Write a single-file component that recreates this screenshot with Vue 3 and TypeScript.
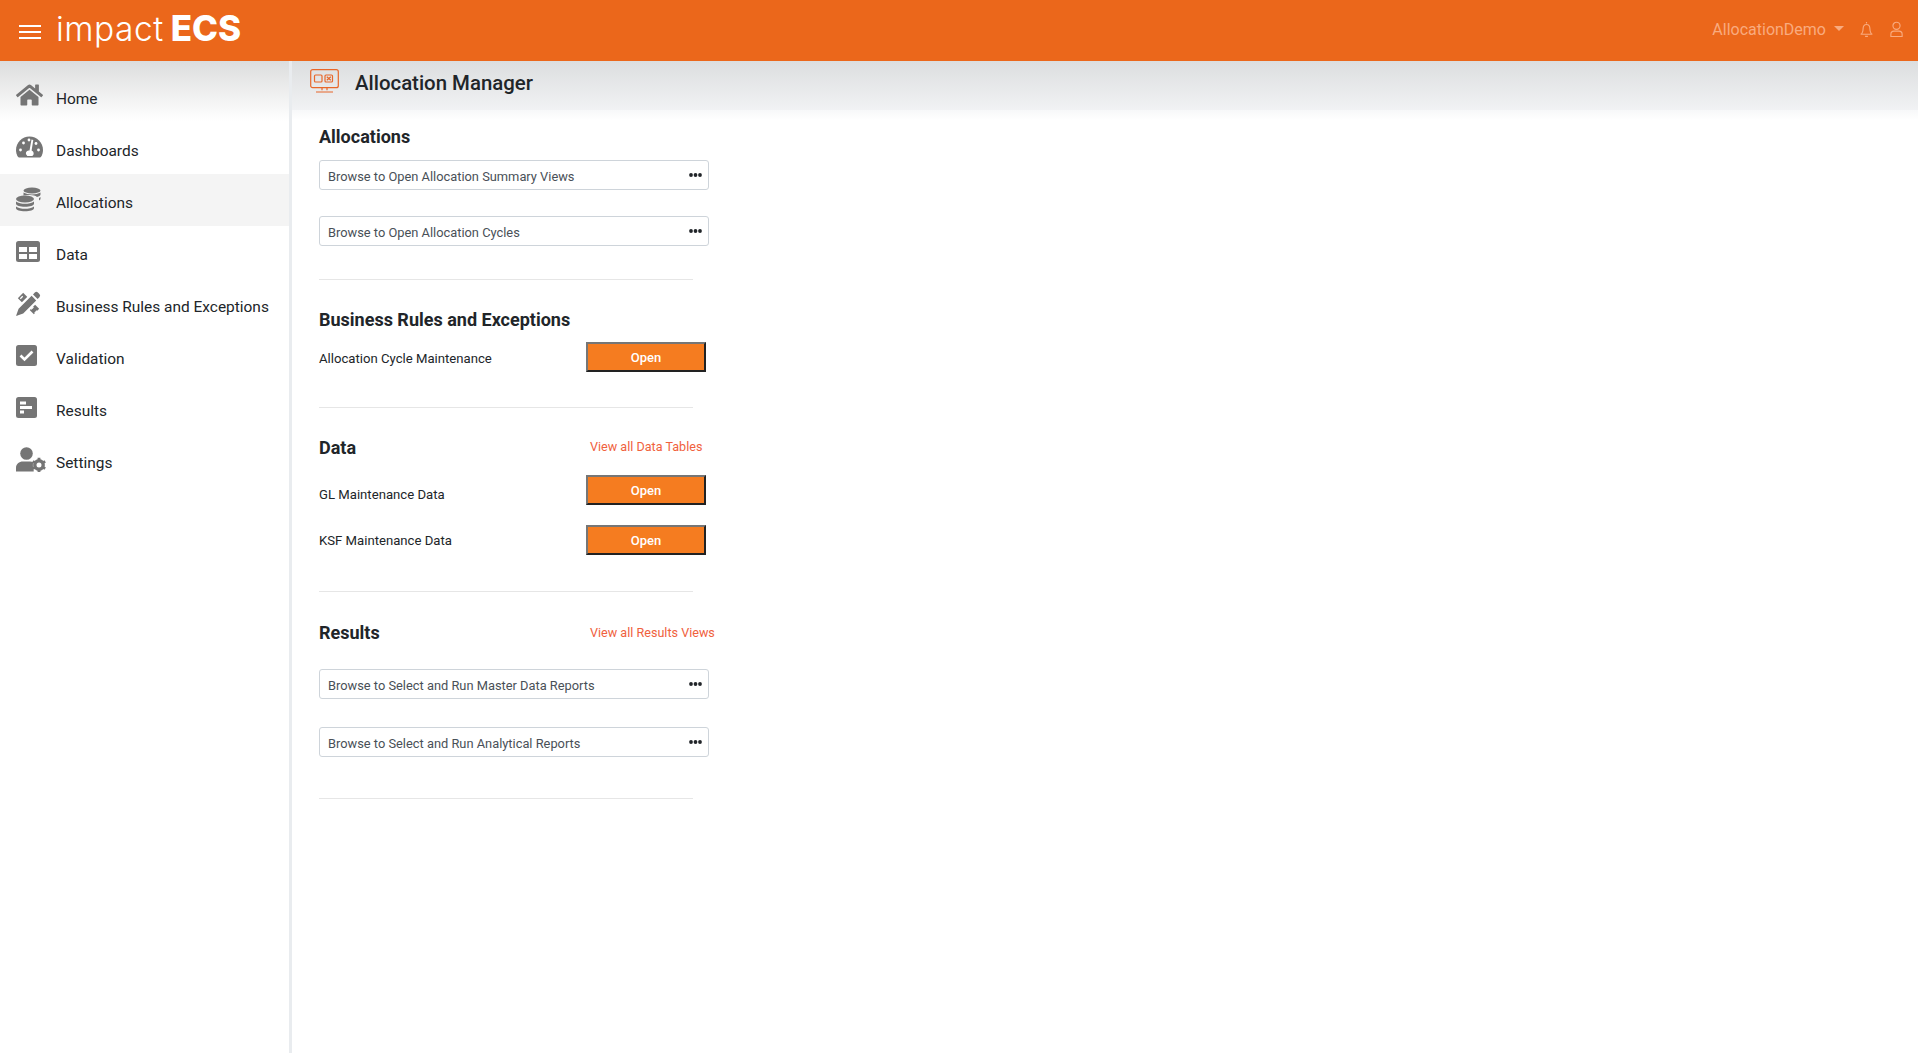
<script setup lang="ts">
const nav = ['Home','Dashboards','Allocations','Data','Business Rules and Exceptions','Validation','Results','Settings']
</script>

<template>
  <div class="app">
    <header class="top">
      <button class="burger" aria-label="Menu"><i></i><i></i><i></i></button>
      <div class="logo"><span class="l1">impact</span><span class="l2">ECS</span></div>
      <div class="right">
        <span class="acct">AllocationDemo</span>
        <span class="caret"></span>
        <svg class="ti bell" viewBox="0 0 16 18" fill="none" stroke="currentColor" stroke-width="1.2"><path d="M8 1v1.600M3.200 13c.9-1.300 1.200-2.600 1.200-5 0-2.500 1.500-4.400 3.600-4.400s3.600 1.900 3.600 4.400c0 2.400.3 3.700 1.200 5 .4.600.9.800 1.400 1H1.800c.5-.2 1-.4 1.400-1zM6.500 16.300h3"/></svg>
        <svg class="ti user" viewBox="0 0 16 18" fill="none" stroke="currentColor" stroke-width="1.2"><circle cx="8" cy="5" r="3.800"/><path d="M2 16.500v-2.500c0-2 1.500-3.300 3.300-3.300h5.400c1.800 0 3.300 1.300 3.300 3.300v2.500z"/></svg>
      </div>
    </header>
    <div class="body">
      <aside class="side">
        <a v-for="(n,i) in nav" :key="n" class="item" :class="{active:i===2}">
          <span class="ic" :class="{sq:i===3||i===5||i===6}">
            <svg v-if="i===0" width="27" height="24" viewBox="0 0 576 512" fill="#757575"><path d="M280.37 148.26L96 300.11V464a16 16 0 0 0 16 16l112.06-.29a16 16 0 0 0 15.92-16V368a16 16 0 0 1 16-16h64a16 16 0 0 1 16 16v95.64a16 16 0 0 0 16 16.05L464 480a16 16 0 0 0 16-16V300L295.67 148.26a12.19 12.19 0 0 0-15.3 0zM571.6 251.47L488 182.56V44.05a12 12 0 0 0-12-12h-56a12 12 0 0 0-12 12v72.61L318.47 43a48 48 0 0 0-61 0L4.34 251.47a12 12 0 0 0-1.6 16.9l25.5 31A12 12 0 0 0 45.15 301l235.22-193.74a12.19 12.19 0 0 1 15.3 0L530.9 301a12 12 0 0 0 16.9-1.6l25.5-31a12 12 0 0 0-1.7-16.93z"/></svg>
            <svg v-else-if="i===1" width="27" height="24" viewBox="0 0 27 24"><path fill="#757575" d="M13.500 1.500C6.100 1.500 0 7.500 0 15c0 2.500.7 4.800 1.900 6.800.3.400.7.700 1.200.7h20.800c.5 0 .9-.3 1.200-.7C26.300 19.800 27 17.500 27 15 27 7.500 20.900 1.500 13.500 1.500z"/><g fill="#fff"><circle cx="13" cy="5" r="1.400"/><circle cx="7.500" cy="8" r="1.400"/><circle cx="4.500" cy="15" r="1.400"/><circle cx="22.500" cy="15" r="1.400"/><circle cx="20" cy="8.500" r="1.400"/><path d="M15.500 4.500l1.800.4-1.700 10.700a3 3 0 0 1 .7 5.400h-5a3 3 0 0 1 2.200-5.500z"/></g></svg>
            <svg v-else-if="i===2" width="25" height="25" viewBox="0 0 25 25" fill="#757575"><ellipse cx="16" cy="3.500" rx="8.500" ry="3"/><path d="M7.500 5.500c2 1.200 5.500 1.900 8.500 1.900s6.500-.7 8.500-1.900v2c0 1-1.500 1.900-3.500 2.500-1.500-1.200-4-1.800-7-1.900-2.600-.1-5 .1-6.500.6zM23 11c.6-.3 1.200-.7 1.500-1.100v1.900c0 .7-.6 1.300-1.500 1.700z"/><ellipse cx="9" cy="12" rx="9" ry="3.500"/><path d="M0 14.500c2 1.500 5.800 2.300 9 2.300s7-.8 9-2.300v2.200c0 1.700-4 3-9 3s-9-1.300-9-3zM0 19.500c2 1.500 5.800 2.300 9 2.300s7-.8 9-2.300v1.700c0 1.700-4 3-9 3s-9-1.300-9-3z"/></svg>
            <svg v-else-if="i===3" width="24" height="21" viewBox="0 0 24 21"><rect width="24" height="21" rx="2.500" fill="#757575"/><g fill="#fff"><rect x="3" y="6" width="8" height="5"/><rect x="13" y="6" width="8" height="5"/><rect x="3" y="13" width="8" height="5"/><rect x="13" y="13" width="8" height="5"/></g></svg>
            <svg v-else-if="i===4" width="25" height="25" viewBox="0 0 25 25"><path d="M4.500 4.500L20.500 20.500" fill="none" stroke="#757575" stroke-width="7.500"/><path d="M4.300 7.700l2.400-2.400M8 11.400l2.400-2.400M15 18.400l2.400-2.400M18.700 22.100l2.400-2.400" stroke="#fff" stroke-width="1.300"/><path d="M20.500 4.500L5 20" fill="none" stroke="#fff" stroke-width="11"/><path d="M18.800 1.600a2.200 2.200 0 0 1 3.100 0l1.500 1.500a2.200 2.200 0 0 1 0 3.100l-1.800 1.800-4.600-4.600zM15.600 4.800l4.600 4.600L7.200 22.400 0 25l2.600-7.200z" fill="#757575"/></svg>
            <svg v-else-if="i===5" width="21" height="21" viewBox="0 0 21 21"><rect width="21" height="21" rx="2.500" fill="#757575"/><path d="M4.500 10.500l4 4 8-8" fill="none" stroke="#fff" stroke-width="2.600"/></svg>
            <svg v-else-if="i===6" width="21" height="21" viewBox="0 0 21 21"><rect width="21" height="21" rx="2.500" fill="#757575"/><g fill="#fff"><rect x="4" y="4.500" width="6" height="3"/><rect x="4" y="9" width="12" height="3"/><rect x="4" y="13.500" width="4" height="3"/></g></svg>
            <svg v-else width="31" height="25" viewBox="0 0 31 25" fill="#757575"><circle cx="10.500" cy="6.500" r="6.300"/><path d="M0 24.500v-3.500C0 17 3 14.500 7 14.500h7c1.200 0 2.300.2 3.300.6-.6 1.700-.6 5.300.4 8.100v1.300z"/><circle cx="23" cy="18" r="4.200" fill="none" stroke="#757575" stroke-width="3.400"/><g stroke="#757575" stroke-width="2.800"><path d="M23 10.800v2.400M23 22.800v2.200M16.800 14.400l2.100 1.200M27.100 20.400l2.100 1.200M16.800 21.600l2.100-1.200M27.100 15.600l2.100-1.200"/></g></svg>
          </span>
          <span class="lb">{{ n }}</span>
        </a>
      </aside>
      <main class="main">
        <div class="titlebar">
          <svg class="ticon" width="29" height="24" viewBox="0 0 29 24" fill="none" stroke="#e8672a" stroke-width="1.200"><rect x=".7" y=".7" width="27.600" height="18" rx="2"/><rect x="4.500" y="6" width="7.500" height="7" rx="1"/><rect x="15" y="6" width="7.500" height="7" rx="1"/><path d="M16.800 7.800l4 3.500M20.800 7.800l-4 3.500M12 18.700v2.500M17 18.700v2.500M6 23h17"/></svg>
          <h1>Allocation Manager</h1>
        </div>
        <div class="fade"></div>
        <div class="content">
          <section class="s1">
            <h2>Allocations</h2>
            <div class="browse"><span>Browse to Open Allocation Summary Views</span><svg class="dots" width="13" height="4" viewBox="0 0 13 4"><circle cx="2" cy="2" r="1.900"/><circle cx="6.500" cy="2" r="1.900"/><circle cx="11" cy="2" r="1.900"/></svg></div>
            <div class="browse gap26"><span>Browse to Open Allocation Cycles</span><svg class="dots" width="13" height="4" viewBox="0 0 13 4"><circle cx="2" cy="2" r="1.900"/><circle cx="6.500" cy="2" r="1.900"/><circle cx="11" cy="2" r="1.900"/></svg></div>
            <hr class="d1" />
          </section>
          <section class="s2">
            <h2>Business Rules and Exceptions</h2>
            <div class="row r1"><span>Allocation Cycle Maintenance</span><button>Open</button></div>
            <hr class="d2" />
          </section>
          <section class="s3">
            <div class="hd"><h2>Data</h2><a>View all Data Tables</a></div>
            <div class="row r2"><span class="gl">GL Maintenance Data</span><button>Open</button></div>
            <div class="row r3"><span class="ksf">KSF Maintenance Data</span><button>Open</button></div>
            <hr class="d3" />
          </section>
          <section class="s4">
            <div class="hd"><h2>Results</h2><a>View all Results Views</a></div>
            <div class="browse g4"><span>Browse to Select and Run Master Data Reports</span><svg class="dots" width="13" height="4" viewBox="0 0 13 4"><circle cx="2" cy="2" r="1.900"/><circle cx="6.500" cy="2" r="1.900"/><circle cx="11" cy="2" r="1.900"/></svg></div>
            <div class="browse g5"><span>Browse to Select and Run Analytical Reports</span><svg class="dots" width="13" height="4" viewBox="0 0 13 4"><circle cx="2" cy="2" r="1.900"/><circle cx="6.500" cy="2" r="1.900"/><circle cx="11" cy="2" r="1.900"/></svg></div>
            <hr class="d4" />
          </section>
        </div>
      </main>
    </div>
  </div>
</template>

<style>
html, body { margin: 0; background: #fff; }
</style>

<style scoped>
* { box-sizing: border-box; }
.app { width: 1918px; height: 1053px; overflow: hidden; display: flex; flex-direction: column; font-family: Roboto, "Liberation Sans", sans-serif; color: #212529; }
.top { height: 61px; flex: none; background: #eb671b; display: flex; align-items: center; padding-left: 19px; padding-right: 14px; }
.burger { width: 22px; height: 14px; padding: 0; border: 0; background: none; display: flex; flex-direction: column; justify-content: space-between; margin-top: 3px; }
.burger i { display: block; height: 2px; background: #fff; }
.logo { margin-left: 15px; margin-top: -5px; color: #fff; display: flex; align-items: baseline; font-family: Inter, sans-serif; line-height: 40px; }
.l1 { font-weight: 300; font-size: 33.5px; letter-spacing: .5px; }
.l2 { font-weight: 800; font-size: 35px; margin-left: 7px; }
.right { margin-left: auto; display: flex; align-items: center; color: #f9ab7f; margin-top: -2px; }
.acct { font-size: 16px; }
.caret { width: 0; height: 0; border: 5px solid transparent; border-top-color: #f9ab7f; border-bottom: 0; margin-left: 8px; margin-top: -2px; }
.ti { color: #f9ab7f; width: 15px; height: 17px; }
.bell { margin-left: 15px; }
.user { margin-left: 15px; }
.body { flex: 1; display: flex; min-height: 0; }
.side { width: 292px; flex: none; border-right: 3px solid #e9ecef; background: linear-gradient(#dcdddd 0, #fff 60px, #fff 100%) no-repeat; padding-top: 9px; }
.item { height: 52px; display: flex; align-items: center; padding-left: 16px; font-size: 15.45px; color: #212529; }
.item.active { background: #f4f4f4; }
.ic { width: 40px; height: 36px; display: flex; align-items: flex-start; flex: none; padding-top: 5px; }
.ic.sq { padding-top: 6.500px; }
.lb { line-height: 20px; padding-top: 6px; }
.main { flex: 1; min-width: 0; }
.titlebar { height: 49px; display: flex; align-items: center; background: linear-gradient(#dcdedf, #f1f2f4); padding-left: 18px; }
.ticon { margin-top: -9px; }
h1 { margin: -5px 0 0 16px; font-size: 20.4px; font-weight: 500; line-height: 44px; color: #212529; }
.fade { height: 10px; background: linear-gradient(#f7f8f9, #fff); }
.content { padding-left: 27px; width: 470px; }
h2 { margin: 0; font-size: 18px; font-weight: 700; line-height: 22px; color: #212529; }
.s1 { padding-top: 6px; }
.browse { width: 390px; height: 30px; border: 1px solid #ced4da; border-radius: 3px; display: flex; align-items: center; justify-content: space-between; padding: 0 6px 0 8px; font-size: 12.85px; color: #495057; background: #fff; margin-top: 12px; }
.browse span { padding-top: 2px; }
.dots { fill: #212529; margin-top: -1px; }
.browse.gap26 { margin-top: 26px; }
hr { border: 0; border-top: 1px solid #e6e6e6; width: 374px; margin: 0; }
.d1 { margin-top: 33px; }
.s2 { padding-top: 29px; }
.row { width: 387px; display: flex; align-items: center; justify-content: space-between; font-size: 13.15px; }
.row span { padding-top: 2px; }
.row .gl { padding-top: 9px; }
.row .ksf { padding-top: 0; }
.r1 { margin-top: 11px; }
button { width: 120px; height: 30px; padding: 0; background: #f57c20; color: #fff; font: 500 13px Roboto, sans-serif; border-style: solid; border-width: 2px; border-color: #767676 #222 #222 #767676; }
.d2 { margin-top: 35px; }
.s3 { padding-top: 29px; }
.hd { width: 420px; display: flex; align-items: center; }
.hd h2 { width: 271px; }
.hd a { font-size: 12.6px; color: #f0613d; margin-top: -4px; }
.s4 .hd a { margin-top: -2px; }
.r2 { margin-top: 16px; }
.r3 { margin-top: 20px; }
.d3 { margin-top: 36px; }
.s4 { padding-top: 30px; }
.g4 { margin-top: 25px; }
.g5 { margin-top: 28px; }
.d4 { margin-top: 41px; }
</style>
